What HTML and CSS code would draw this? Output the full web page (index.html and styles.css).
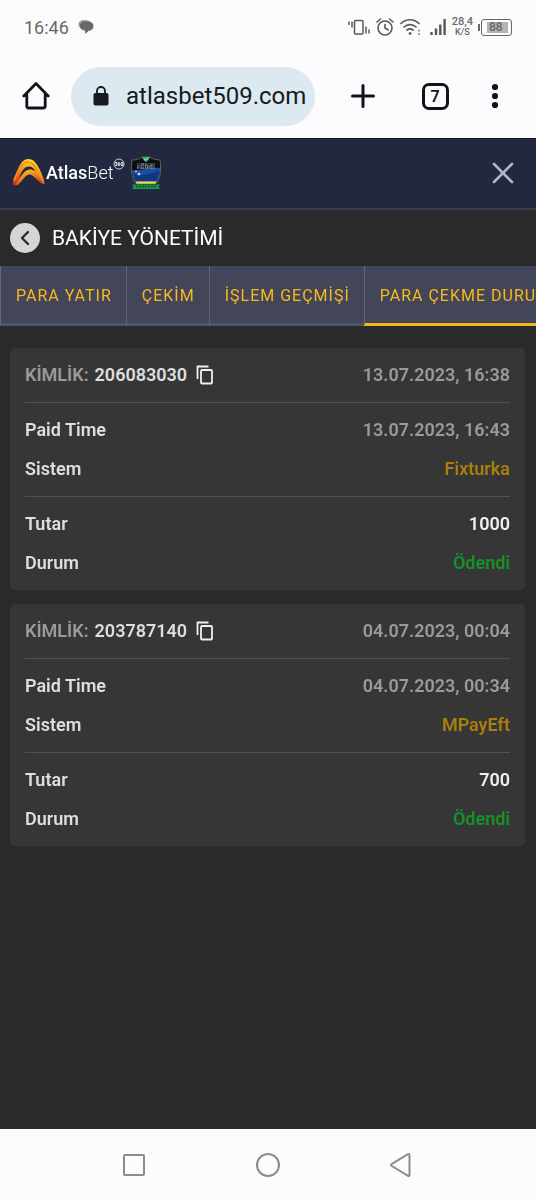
FILE: index.html
```html
<!DOCTYPE html>
<html lang="tr">
<head>
    <meta charset="UTF-8">
    <meta name="viewport" content="width=device-width, initial-scale=1">
    <title>Bakiye Yönetimi</title>
    <link rel="stylesheet" href="styles.css">
</head>
<body>
<div class="status">
    <span class="clock">16:46</span>
    <svg class="chat" width="16" height="16" viewBox="0 0 16 16">
        <path d="M6 1C3 1 .5 2.800.5 5S1.500 8.500 3 9.300L12 3C11 1.500 8.500 1 6 1z" fill="#9a9a9c"/>
        <path d="M7 2.500h3c3.200 0 5.500 1.900 5.500 4.500s-2.300 4.800-4.800 4.800L7.500 15l-.5-3.500C3.800 11.300 1.800 9.500 1.800 7S4 2.500 7 2.500z" fill="#68686b"/>
    </svg>
    <div class="status-icons">
        <svg width="22" height="18" viewBox="0 0 22 18" fill="none" stroke="#58585b" stroke-width="1.500">
            <rect x="6.500" y="2.500" width="8.500" height="13.500" rx="1"/>
            <path d="M1 3.500v3.500M4 3.500v6M18 8.500v7M21 11.500v4"/>
        </svg>
        <svg width="18" height="18" viewBox="0 0 18 18" fill="none" stroke="#58585b" stroke-width="1.600" stroke-linecap="round">
            <circle cx="9" cy="10" r="7"/>
            <path d="M9 6.500V10l3 1.800M1 4L4.500 1M17 4L13.500 1"/>
        </svg>
        <svg width="22" height="18" viewBox="0 0 22 18" fill="none" stroke="#58585b" stroke-width="1.700" stroke-linecap="round">
            <path d="M1 5.500c5-5 13-5 18 0M4 9c3.500-3.300 8.500-3.300 12 0M7 12c2-1.600 4-1.600 6 0"/>
            <circle cx="10" cy="15.500" r="1" fill="#58585b" stroke-width="1"/>
            <path d="M19 12.500v.1M19 16v.1"/>
        </svg>
        <svg class="signal" width="16" height="18" viewBox="0 0 16 18" stroke="#58585b" stroke-width="2.400">
            <path d="M1.500 14v3M6 10.500V17M10.300 6.500V17M14.600 1v16"/>
        </svg>
        <span class="speed">28,4<small>K/S</small></span>
        <span class="battery">88</span>
    </div>
</div>

<div class="browser">
    <button class="tool" aria-label="Ana sayfa">
        <svg width="28" height="28" viewBox="0 0 28 28" fill="none" stroke="#111416" stroke-width="2.800" stroke-linejoin="round" stroke-linecap="round">
            <path d="M1.800 14L14 1.500L26.200 14M4.800 12v12a2 2 0 0 0 2 2h14.400a2 2 0 0 0 2-2V12"/>
        </svg>
    </button>
    <a class="address" href="#">
        <svg width="16" height="20" viewBox="0 0 16 20">
            <path d="M4 8V5a4 4 0 0 1 8 0v3" fill="none" stroke="#151b20" stroke-width="1.800"/>
            <rect x=".5" y="7" width="15" height="12.500" rx="1.800" fill="#151b20"/>
        </svg>
        <span>atlasbet509.com</span>
    </a>
    <button class="tool add" aria-label="Yeni sekme">
        <svg width="24" height="24" viewBox="0 0 24 24" stroke="#111416" stroke-width="3" stroke-linecap="round">
            <path d="M12 1.500v21M1.500 12h21"/>
        </svg>
    </button>
    <button class="tool pages" aria-label="Sekmeler"><span>7</span></button>
    <button class="tool" aria-label="Menü">
        <svg width="8" height="26" viewBox="0 0 8 26" fill="#111416">
            <circle cx="4" cy="4" r="3.100"/>
            <circle cx="4" cy="13" r="3.100"/>
            <circle cx="4" cy="22" r="3.100"/>
        </svg>
    </button>
</div>

<main class="site">
    <header class="header">
        <a class="logo" href="#">
            <svg class="arch" width="34" height="30" viewBox="0 0 34 30">
                <defs>
                    <linearGradient id="outer" x1="0" y1="1" x2=".4" y2="0">
                        <stop offset="0" stop-color="#c51f17"/>
                        <stop offset=".5" stop-color="#ee7c1c"/>
                        <stop offset="1" stop-color="#ffd52a"/>
                    </linearGradient>
                    <linearGradient id="inner" x1=".2" y1="0" x2=".8" y2="1">
                        <stop offset="0" stop-color="#ffc928"/>
                        <stop offset="1" stop-color="#d52f19"/>
                    </linearGradient>
                </defs>
                <path d="M1.500 27C-.5 24.500 2 19 4.500 14C8 6 11 1 16 1c6 0 9 5 11.500 10c2.500 5 4.500 10 5 14c0 2-3 1-5-2C23 15 19 12 16 13c-5 1-7 10-9 13c-1 1.500-4 2-5.500 1z" fill="url(#outer)"/>
                <path d="M7 20C10 13 12 8.500 17 8.500c3 0 5 2 6.500 5C19 10.500 15 11 12.500 14C11 16 9 18.500 7 20z" fill="#22283f"/>
                <path d="M3 26.500c4-1 5-12 14-14.500c5-1 9 4 14 14c-4-1-8-8-13-9.500C12 16 9 28 3 26.500z" fill="url(#inner)"/>
                <path d="M2 23C6 13 10 4 16 4c5 0 8 6 11 12" fill="none" stroke="#f48d1b" stroke-width="1.500"/>
                <path d="M12 24c1-3 3-5.500 5.500-5.500c3 0 5 2.500 7 4.500c-3-1.500-8-3-12.500 1z" fill="#22283f"/>
            </svg>
            <span class="brand"><b>Atlas</b>Bet</span>
            <svg class="mark" width="12" height="12" viewBox="0 0 12 12">
                <circle cx="6" cy="6" r="5" fill="none" stroke="#c9cbd6"/>
                <text x="6" y="8" text-anchor="middle" font-size="5" font-weight="700" fill="#fff">360</text>
            </svg>
        </a>
        <a class="licence" href="#" aria-label="Curacao eGaming">
            <svg width="30" height="34" viewBox="0 0 30 34">
                <path d="M1 4c4 0 8-1 10-3h8c2 2 6 3 10 3c1 8 1 16-3 23H4C0 20 0 12 1 4z" fill="#0a0d12" stroke="#77735a" stroke-width=".8"/>
                <path d="M1 14c9 1 19-3 28-2c0 6-1 11-3 14H4.500C2 22 1 18 1 14z" fill="#174ea6"/>
                <path d="M2 18c8 3 18 0 26-4c-1 6-2 9-3 11H5z" fill="#103780"/>
                <path d="M4.500 25.500h21l-1 2.200h-19z" fill="#f0df42"/>
                <path d="M11 1h8l-1.500 3L15 6l-2.500-2z" fill="#29b76b"/>
                <path d="M13 3l1.500 1.500L17 2" fill="none" stroke="#bff5d5"/>
                <text x="15" y="9.500" text-anchor="middle" font-size="4" fill="#b6babd">CURACAO</text>
                <text x="15" y="13" text-anchor="middle" font-size="4" fill="#b6babd">EGAMING</text>
                <path d="M8 16l.6 1.400 1.400.6-1.400.6L8 20l-.6-1.400L6 18l1.400-.6zM5 14l.4 1 1 .4-1 .4-.4 1-.4-1-1-.4 1-.4z" fill="#fff"/>
                <path d="M1 28.500h28l-1.500 2L29 33H1l1.500-2.500z" fill="#169753"/>
                <path d="M5 30.500h20" stroke="#0a4c31" stroke-width="1.500" stroke-dasharray="2 1"/>
            </svg>
        </a>
        <button class="close" aria-label="Kapat">
            <svg width="22" height="22" viewBox="0 0 22 22" stroke="#b4b6c0" stroke-width="2.600" stroke-linecap="round">
                <path d="M2 2l18 18M20 2L2 20"/>
            </svg>
        </button>
    </header>

    <div class="title">
        <button class="back" aria-label="Geri">
            <svg width="10" height="16" viewBox="0 0 10 16" fill="none" stroke="#2a2a2a" stroke-width="2.400" stroke-linecap="round" stroke-linejoin="round">
                <path d="M8 2L2 8l6 6"/>
            </svg>
        </button>
        <h1>BAKİYE YÖNETİMİ</h1>
    </div>

    <nav class="tabs">
        <a href="#">PARA YATIR</a>
        <a href="#">ÇEKİM</a>
        <a href="#">İŞLEM GEÇMİŞİ</a>
        <a class="active" href="#">PARA ÇEKME DURUMU</a>
    </nav>

    <div class="list">
        <section class="card">
            <div class="card-head">
                <span class="label">KİMLİK:</span>
                <span class="number">206083030</span>
                <button class="copy" aria-label="Kopyala">
                    <svg width="18" height="20" viewBox="0 0 18 20" fill="none" stroke="#f0f0f0" stroke-width="1.800">
                        <path d="M1.500 14V1.500h11"/>
                        <rect x="5" y="5" width="11" height="13.500" rx="1"/>
                    </svg>
                </button>
                <time>13.07.2023, 16:38</time>
            </div>
            <dl>
                <div><dt>Paid Time</dt><dd>13.07.2023, 16:43</dd></div>
                <div><dt>Sistem</dt><dd class="system">Fixturka</dd></div>
            </dl>
            <dl>
                <div><dt>Tutar</dt><dd class="amount">1000</dd></div>
                <div><dt>Durum</dt><dd class="paid">Ödendi</dd></div>
            </dl>
        </section>

        <section class="card">
            <div class="card-head">
                <span class="label">KİMLİK:</span>
                <span class="number">203787140</span>
                <button class="copy" aria-label="Kopyala">
                    <svg width="18" height="20" viewBox="0 0 18 20" fill="none" stroke="#f0f0f0" stroke-width="1.800">
                        <path d="M1.500 14V1.500h11"/>
                        <rect x="5" y="5" width="11" height="13.500" rx="1"/>
                    </svg>
                </button>
                <time>04.07.2023, 00:04</time>
            </div>
            <dl>
                <div><dt>Paid Time</dt><dd>04.07.2023, 00:34</dd></div>
                <div><dt>Sistem</dt><dd class="system">MPayEft</dd></div>
            </dl>
            <dl>
                <div><dt>Tutar</dt><dd class="amount">700</dd></div>
                <div><dt>Durum</dt><dd class="paid">Ödendi</dd></div>
            </dl>
        </section>
    </div>
</main>

<div class="navbar">
    <button aria-label="Son uygulamalar">
        <svg width="24" height="24" viewBox="0 0 24 24"><rect x="2" y="2" width="20" height="20" rx="1"/></svg>
    </button>
    <button aria-label="Ana ekran">
        <svg width="24" height="24" viewBox="0 0 24 24"><circle cx="12" cy="12" r="11"/></svg>
    </button>
    <button aria-label="Geri dön">
        <svg width="24" height="24" viewBox="0 0 24 24"><path d="M1.500 11.200L18 1.200q1.500-.6 1.500 1v19.600q0 1.600-1.500 1L1.500 12.800q-1-.8 0-1.600z"/></svg>
    </button>
</div>
</body>
</html>
```
FILE: styles.css
```css
* {
    box-sizing: border-box;
}

body, h1, dl, dd {
    margin: 0;
}

body {
    min-height: 100vh;
    display: flex;
    flex-direction: column;
    background: #fcfcff;
    font-family: Roboto, "Liberation Sans", sans-serif;
}

button {
    display: flex;
    align-items: center;
    justify-content: center;
    padding: 0;
    border: 0;
    background: none;
    font-family: inherit;
    cursor: pointer;
}

a {
    text-decoration: none;
}

svg {
    display: block;
    flex: none;
}

/* phone status bar */
.status {
    height: 54px;
    padding: 0 24px;
    display: flex;
    align-items: center;
    color: #68686b;
}

.clock {
    font-size: 18px;
}

.chat {
    margin-left: 9px;
}

.status-icons {
    margin-left: auto;
    display: flex;
    align-items: center;
    gap: 6px;
}

.signal {
    margin-left: 2px;
}

.speed {
    font-size: 11px;
    line-height: 10px;
    text-align: center;
    font-weight: 500;
}

.speed small {
    display: block;
    font-size: 9px;
    line-height: 10px;
}

.battery {
    position: relative;
    width: 31px;
    height: 17px;
    margin-left: 2px;
    border: 1px solid #68686b;
    border-radius: 3px;
    background: linear-gradient(#b5b5b8, #b5b5b8) 5px 2px / 21px 11px no-repeat;
    font-size: 12px;
    line-height: 15px;
    font-weight: 500;
    padding-left: 7px;
}

.battery::before {
    content: "";
    position: absolute;
    left: -4px;
    top: 4px;
    width: 2px;
    height: 7px;
    background: #68686b;
}

/* browser toolbar */
.browser {
    height: 84px;
    padding: 0 17px 0 12px;
    display: flex;
    align-items: center;
}

.tool {
    width: 48px;
    height: 48px;
}

.address {
    flex: 1;
    height: 59px;
    margin: 0 24px 0 11px;
    padding-left: 22px;
    display: flex;
    align-items: center;
    gap: 17px;
    border-radius: 30px;
    background: #dde9f0;
    color: #151b20;
    font-size: 24px;
}

.pages {
    margin: 0 12px 0 24px;
}

.pages span {
    width: 27px;
    height: 27px;
    border: 3px solid #111416;
    border-radius: 7px;
    color: #111416;
    font-size: 16px;
    line-height: 21px;
    font-weight: 600;
}

/* site */
.site {
    flex: 1;
    background: #2a2a2a;
}

.header {
    height: 72px;
    padding: 0 11px 2px 12px;
    display: flex;
    align-items: center;
    background: #22283f;
    border-top: 1px solid #161a28;
    border-bottom: 2px solid #393d4c;
}

.logo {
    display: flex;
    align-items: center;
    color: #fff;
}

.brand {
    font-size: 18px;
    font-weight: 300;
}

.brand b {
    font-weight: 500;
}

.mark {
    align-self: flex-start;
}

.licence {
    margin-left: 6px;
}

.close {
    width: 44px;
    height: 44px;
    margin-left: auto;
}

.title {
    height: 56px;
    padding: 0 10px;
    display: flex;
    align-items: center;
    gap: 12px;
}

.title h1 {
    color: #fff;
    font-size: 21px;
    font-weight: 400;
}

.back {
    width: 30px;
    height: 30px;
    border-radius: 50%;
    background: #d5d5d5;
}

.tabs {
    display: flex;
    overflow-x: auto;
    scrollbar-width: none;
    background: #424658;
}

.tabs a {
    flex: none;
    height: 60px;
    padding: 0 14px 0 15px;
    border-left: 1px solid #61677a;
    border-bottom: 3px solid #505464;
    color: #fbba1b;
    font-size: 16px;
    line-height: 60px;
    letter-spacing: 1px;
}

.tabs .active {
    border-bottom-color: #f3b625;
}

.list {
    padding: 22px 11px 22px 10px;
    display: grid;
    gap: 14px;
}

.card {
    padding: 0 15px;
    border-radius: 5px;
    background: #363636;
    color: #9a9a9a;
    font-size: 18px;
    font-weight: 600;
}

.card-head {
    height: 54px;
    padding-bottom: 1px;
    display: flex;
    align-items: center;
}

.number {
    margin-left: 6px;
    color: #dedede;
}

.card-head time {
    margin-left: auto;
}

.copy {
    margin-left: 9px;
}

.card dl {
    padding: 7px 0 8px;
    border-top: 1px solid #505050;
}

.card dl div {
    display: flex;
    justify-content: space-between;
    line-height: 39px;
}

.card dt {
    color: #dedede;
}

.card .system {
    color: #a97e0a;
}

.card .amount {
    color: #efefef;
}

.card .paid {
    color: #178f2b;
}

/* phone navigation bar */
.navbar {
    height: 71px;
    padding: 0 67px;
    display: grid;
    grid-template-columns: repeat(3, 1fr);
}

.navbar svg {
    fill: none;
    stroke: #8c8c8e;
    stroke-width: 2;
}
```
